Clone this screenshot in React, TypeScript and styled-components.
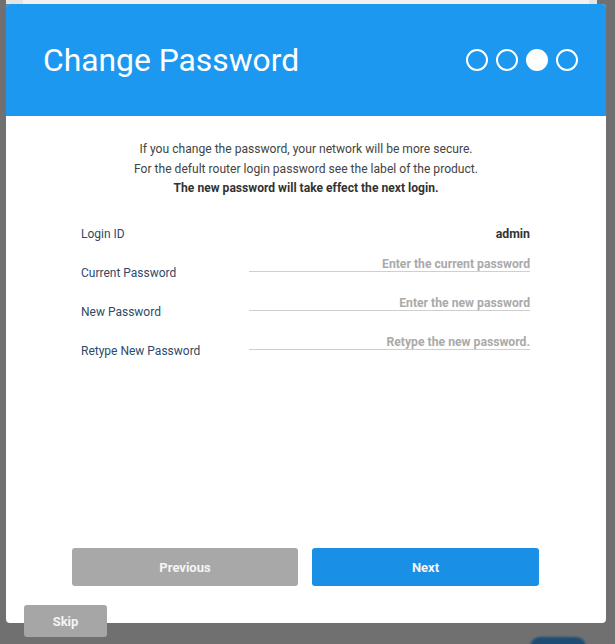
import React from "react";
import styled, { createGlobalStyle } from "styled-components";

const Global = createGlobalStyle`
  html, body { margin: 0; padding: 0; }
  body {
    background: #707070;
    font-family: Roboto, "Liberation Sans", Arial, sans-serif;
    overflow: hidden;
  }
  * { box-sizing: border-box; }
`;

const Stage = styled.div`
  position: relative;
  width: 615px;
  height: 644px;
  padding: 4px 0 0 6px;
  background: #707070;
`;

const BackPage = styled.div`
  position: absolute;
  top: 0;
  left: 6px;
  width: 591px;
  height: 4px;
  background: linear-gradient(
    to right,
    #e4e4e4 0 17px,
    #f1f1f1 17px 583px,
    #e4e4e4 583px 591px
  );
`;

const Modal = styled.div`
  position: relative;
  width: 600px;
  height: 619px;
  background: #ffffff;
  border-radius: 4px;
  overflow: hidden;
  display: flex;
  flex-direction: column;
`;

const Header = styled.div`
  height: 112px;
  background: #1d98f0;
  display: flex;
  align-items: center;
  justify-content: space-between;
  padding: 0 28px 0 37px;
`;

const Title = styled.h1`
  margin: 0;
  font-size: 31.8px;
  font-weight: 400;
  color: #ffffff;
`;

const Steps = styled.div`
  display: flex;
  gap: 8px;
`;

const Dot = styled.span<{ $active?: boolean }>`
  width: 22px;
  height: 22px;
  border-radius: 50%;
  border: 2px solid #ffffff;
  background: ${(p) => (p.$active ? "#ffffff" : "transparent")};
`;

const Body = styled.div`
  flex: 1;
  display: flex;
  flex-direction: column;
  align-items: center;
  padding-top: 24px;
`;

const Intro = styled.div`
  text-align: center;
  font-size: 12.1px;
  line-height: 19.5px;
  color: #444;
`;

const Strong = styled.div`
  font-weight: 700;
  color: #333;
`;

const Form = styled.div`
  margin-top: 16px;
  margin-right: 1px;
  width: 449px;
  display: flex;
  flex-direction: column;
`;

const Row = styled.div`
  height: 39px;
  display: grid;
  grid-template-columns: 168px 1fr;
  align-items: center;
`;

const Label = styled.div`
  font-size: 12px;
  color: #2f4a6a;
`;

const Value = styled.div`
  text-align: right;
  font-size: 12.3px;
  font-weight: 700;
  color: #333;
`;

const Input = styled.input`
  align-self: start;
  margin-top: 3px;
  height: 15px;
  width: 100%;
  border: none;
  border-bottom: 1px solid #cfcfcf;
  padding: 0;
  outline: none;
  text-align: right;
  font-family: inherit;
  font-size: 12.2px;
  font-weight: 700;
  background: transparent;
  &::placeholder {
    color: #aaaaaa;
    opacity: 1;
  }
`;

const Actions = styled.div`
  margin-top: auto;
  margin-bottom: 37px;
  margin-right: 1px;
  display: flex;
  gap: 14px;
`;

const Button = styled.button<{ $primary?: boolean }>`
  width: ${(p) => (p.$primary ? "227px" : "226px")};
  height: 38px;
  border: none;
  border-radius: 3px;
  background: ${(p) => (p.$primary ? "#1a8fe6" : "#a8a8a8")};
  color: #f4f4f4;
  font-family: inherit;
  font-size: 13px;
  font-weight: 700;
  cursor: pointer;
`;

const SkipButton = styled.button`
  position: absolute;
  left: 24px;
  top: 605px;
  width: 83px;
  height: 32px;
  border: none;
  border-radius: 3px;
  background: #a6a6a6;
  color: #f4f4f4;
  font-family: inherit;
  font-size: 13px;
  font-weight: 700;
`;

const Blob = styled.div`
  position: absolute;
  left: 530px;
  top: 637px;
  width: 56px;
  height: 20px;
  border-radius: 10px;
  background: #1d4d74;
  filter: blur(1px);
`;

const fields = [
  { label: "Current Password", placeholder: "Enter the current password" },
  { label: "New Password", placeholder: "Enter the new password" },
  { label: "Retype New Password", placeholder: "Retype the new password." },
];

export default function App() {
  return (
    <>
      <Global />
      <Stage>
        <BackPage />
        <Modal>
          <Header>
            <Title>Change Password</Title>
            <Steps>
              <Dot />
              <Dot />
              <Dot $active />
              <Dot />
            </Steps>
          </Header>
          <Body>
            <Intro>
              <div>If you change the password, your network will be more secure.</div>
              <div>For the defult router login password see the label of the product.</div>
              <Strong>The new password will take effect the next login.</Strong>
            </Intro>
            <Form>
              <Row>
                <Label>Login ID</Label>
                <Value>admin</Value>
              </Row>
              {fields.map((f) => (
                <Row key={f.label}>
                  <Label>{f.label}</Label>
                  <Input type="password" placeholder={f.placeholder} />
                </Row>
              ))}
            </Form>
            <Actions>
              <Button>Previous</Button>
              <Button $primary>Next</Button>
            </Actions>
          </Body>
        </Modal>
        <SkipButton>Skip</SkipButton>
        <Blob />
      </Stage>
    </>
  );
}
